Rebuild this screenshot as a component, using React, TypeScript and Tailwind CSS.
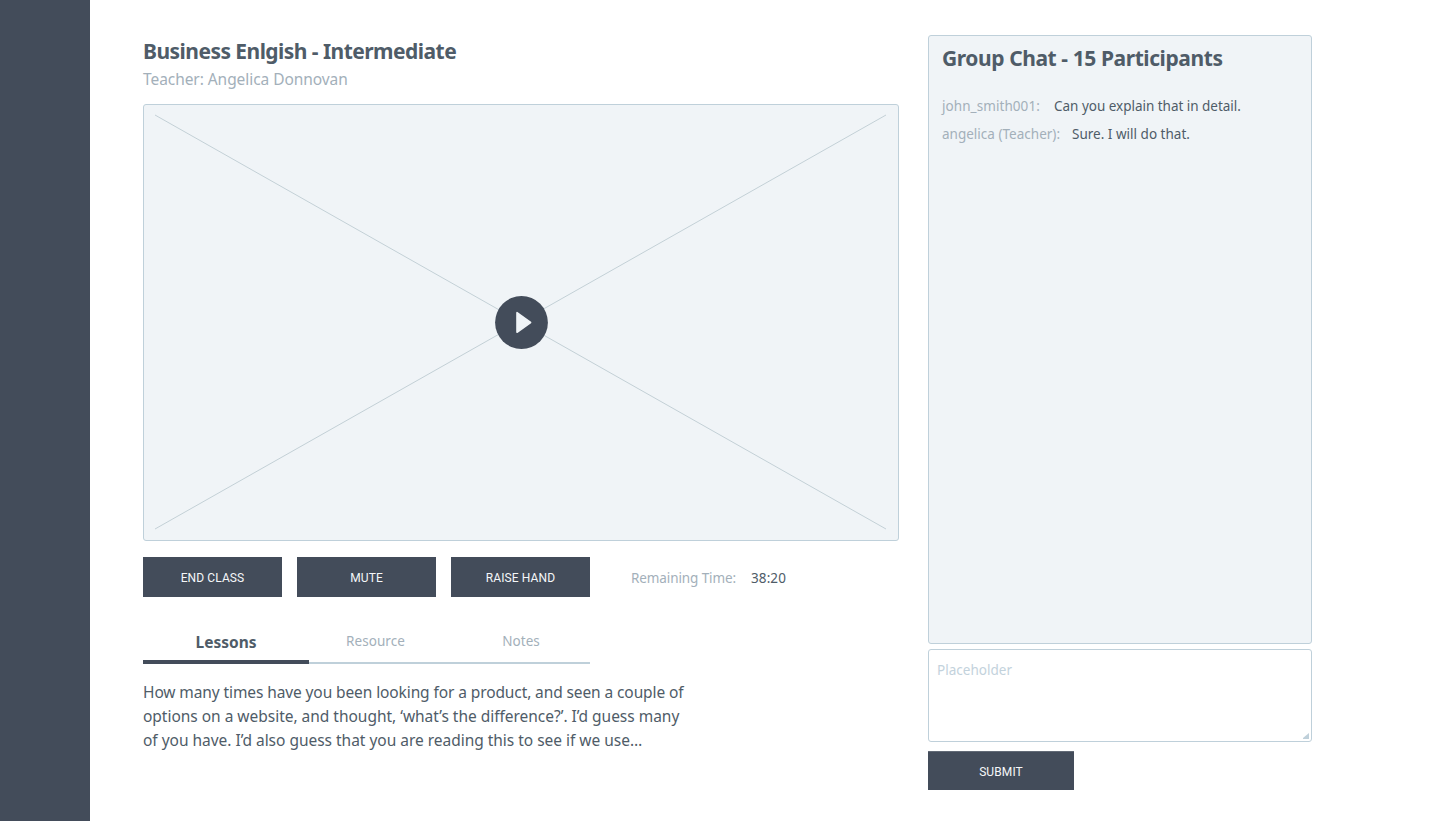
import { useState } from "react";

function VideoPlayer() {
  return (
    <div className="mt-[12px] h-[437px] w-[756px] rounded-[3px] border border-[#bfd0da] bg-[#f0f4f7]">
      <svg width="754" height="435" viewBox="144 105 754 435" className="block">
        <path
          d="M155 115 886 529M886 115 155 529"
          stroke="#c3d0d6"
          strokeWidth="1"
          fill="none"
        />
        <circle cx="521.5" cy="322.5" r="26.4" fill="#434c5a" />
        <path
          d="M517 312.7v19.6l13.6-9.8z"
          fill="#f0f4f7"
          stroke="#f0f4f7"
          strokeWidth="1.6"
          strokeLinejoin="round"
        />
      </svg>
    </div>
  );
}

const buttonClass =
  "flex items-center justify-center bg-[#434c5a] pt-[2px] font-[Roboto,sans-serif] text-[12px] leading-[16px] tracking-[0.1px] text-[#f5f7f9]";

const messages = [
  { from: "john_smith001:", text: "Can you explain that in detail.", fromClass: "w-[112px] tracking-[0.07px]", textClass: "tracking-[-0.02px]" },
  { from: "angelica (Teacher):", text: "Sure. I will do that.", fromClass: "w-[130px] tracking-[0.01px]", textClass: "tracking-[0.01px]" },
];

export default function App() {
  const [draft, setDraft] = useState("");
  return (
    <div className="flex h-[821px] w-[1440px] overflow-hidden bg-white font-['Noto_Sans',sans-serif] text-[#4f5c68]">
      <aside className="w-[90px] shrink-0 bg-[#434c5a]" />

      <main className="ml-[53px] w-[756px] shrink-0 pt-[36px]">
        <h1 className="h-[30px] whitespace-nowrap text-[21px] leading-[30px] font-bold tracking-[-0.54px]">
          <span>Business Enlgish - Intermediate</span>
        </h1>
        <p className="mt-[1px] mb-[13px] h-[24px] whitespace-nowrap text-[15.5px] leading-[24px] tracking-[-0.06px] text-[#a3b0ba]">
          <span>Teacher: Angelica Donnovan</span>
        </p>
        <VideoPlayer />

        <div className="mt-[16px] flex h-[40px] items-center gap-[15px]">
          <button className={`${buttonClass} h-[40px] w-[139px]`}><span>END CLASS</span></button>
          <button className={`${buttonClass} h-[40px] w-[139px]`}><span>MUTE</span></button>
          <button className={`${buttonClass} h-[40px] w-[139px]`}><span>RAISE HAND</span></button>
          <p className="ml-[26px] flex whitespace-nowrap pt-[2px] text-[13.5px] leading-[20px]">
            <span className="w-[120px] tracking-[-0.1px] text-[#a3b0ba]">Remaining Time:</span>
            <span className="tracking-[0.1px]">38:20</span>
          </p>
        </div>

        <nav className="mt-[27px] flex h-[40px] w-[447px]">
          <button className="h-[40px] w-[166px] border-b-4 border-[#434c5a] text-[15.5px] leading-[24px] font-bold">
            <span>Lessons</span>
          </button>
          <div className="flex h-[40px] flex-1 border-b-2 border-[#bfd0da] text-[13.5px] leading-[20px] tracking-[0.06px] text-[#a3b0ba]">
            <button className="h-[34px] w-[133px]"><span>Resource</span></button>
            <button className="ml-[10px] h-[34px] w-[138px]"><span>Notes</span></button>
          </div>
        </nav>

        <p className="mt-[16px] whitespace-nowrap text-[15.5px] leading-[24px]">
          <span className="tracking-[-0.105px]">How many times have you been looking for a product, and seen a couple of</span>
          <br />
          <span className="tracking-[-0.02px]">options on a website, and thought, ‘what’s the difference?’. I’d guess many</span>
          <br />
          <span className="tracking-[-0.02px]">of you have. I’d also guess that you are reading this to see if we use…</span>
        </p>
      </main>

      <section className="ml-[29px] flex w-[384px] shrink-0 flex-col pt-[35px]">
        <div className="h-[609px] rounded-[3px] border border-[#bfd0da] bg-[#f0f4f7] px-[13px] pt-[7px]">
          <h2 className="h-[30px] whitespace-nowrap text-[21px] leading-[30px] font-bold tracking-[-0.42px]">
            <span>Group Chat - 15 Participants</span>
          </h2>
          <ul className="mt-[19px] text-[13.5px] leading-[28px] whitespace-nowrap">
            {messages.map((m) => (
              <li key={m.from} className="flex h-[28px]">
                <span className={`${m.fromClass} text-[#a3b0ba]`}>{m.from}</span>
                <span className={m.textClass}>{m.text}</span>
              </li>
            ))}
          </ul>
        </div>

        <div className="relative mt-[5px] h-[93px]">
          <textarea
            value={draft}
            onChange={(e) => setDraft(e.target.value)}
            placeholder="Placeholder"
            className="block h-[93px] w-[384px] resize-none rounded-[3px] border border-[#bfd0da] bg-white px-[8px] pt-[10px] text-[13.5px] leading-[20px] tracking-[0.02px] outline-none placeholder:text-[#c3d2dc]"
          />
          <svg width="6" height="6" className="pointer-events-none absolute right-[3px] bottom-[3px]">
            <path d="M6 0v6H0V5z" fill="#bfd0da" />
          </svg>
        </div>

        <button className={`${buttonClass} mt-[9px] h-[39px] w-[146px] border-t border-[#626a76] pt-[1px]`}><span>SUBMIT</span></button>
      </section>
    </div>
  );
}
